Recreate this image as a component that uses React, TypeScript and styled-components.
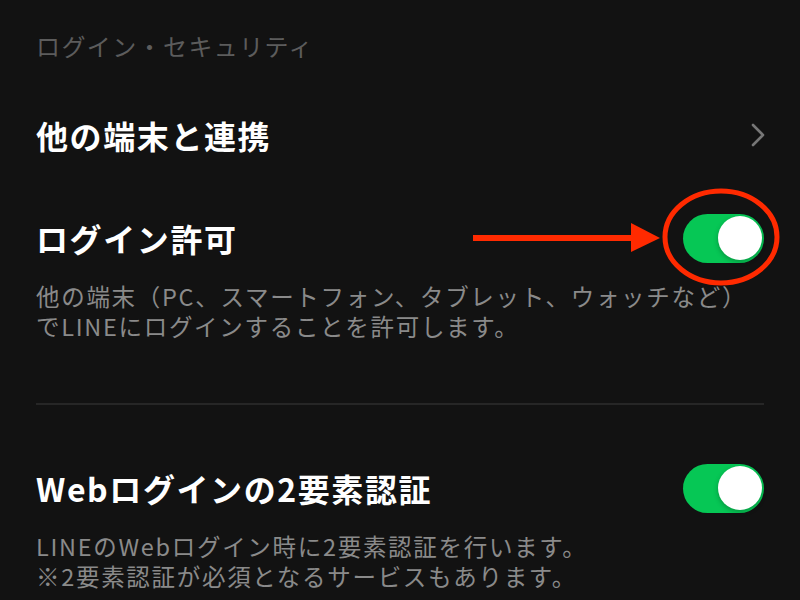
import React from "react";
import styled, { createGlobalStyle } from "styled-components";

const GlobalStyle = createGlobalStyle`
  html, body {
    margin: 0;
    padding: 0;
    background: #121212;
  }
  body {
    font-family: "Noto Sans CJK JP", "Noto Sans", sans-serif;
    -webkit-font-smoothing: antialiased;
  }
`;

const Page = styled.div`
  width: 800px;
  height: 600px;
  overflow: hidden;
  background: #121212;
  padding: 0 36px;
  box-sizing: border-box;
  display: flex;
  flex-direction: column;
`;

const SectionHeader = styled.div`
  margin-top: 31px;
  font-size: 24px;
  line-height: 30px;
  color: #5c5c5c;
  letter-spacing: 1.4px;
`;

const Row = styled.div<{ $top: number }>`
  position: relative;
  margin-top: ${(p) => p.$top}px;
  height: 60px;
  display: flex;
  align-items: center;
  justify-content: space-between;
`;

const Title = styled.div`
  font-size: 32px;
  font-weight: 700;
  color: #ffffff;
  letter-spacing: 1.6px;
  line-height: 60px;
`;

const Description = styled.div`
  margin-top: 13px;
  display: flex;
  flex-direction: column;
`;

const DescLine = styled.div`
  font-size: 23.5px;
  line-height: 30px;
  height: 30px;
  color: #8a8a8a;
  white-space: nowrap;
  letter-spacing: 1.7px;
`;

const Divider = styled.div`
  margin-top: 62px;
  height: 2px;
  background: #262626;
`;

const Track = styled.div<{ $on: boolean }>`
  width: 81px;
  height: 49px;
  border-radius: 25px;
  background: ${(p) => (p.$on ? "#06c755" : "#3a3a3c")};
  position: relative;
  flex-shrink: 0;
`;

const Knob = styled.div<{ $on: boolean }>`
  position: absolute;
  top: 2.5px;
  ${(p) => (p.$on ? "right: 2.5px;" : "left: 2.5px;")}
  width: 44px;
  height: 44px;
  border-radius: 50%;
  background: #ffffff;
  box-shadow: 0 2px 5px rgba(0, 0, 0, 0.25);
`;

const Chevron = styled.svg`
  width: 14px;
  height: 24px;
  margin-right: -1px;
`;

const Annotation = styled.svg`
  position: absolute;
  left: 436px;
  top: -20px;
  width: 310px;
  height: 100px;
  overflow: visible;
  pointer-events: none;
`;

const Toggle = ({ on }: { on: boolean }) => (
  <Track $on={on}>
    <Knob $on={on} />
  </Track>
);

export default function App() {
  return (
    <>
      <GlobalStyle />
      <Page>
        <SectionHeader>ログイン・セキュリティ</SectionHeader>
        <Row $top={44}>
          <Title>他の端末と連携</Title>
          <Chevron viewBox="0 0 14 24">
            <polyline
              points="2,2 12,12 2,22"
              fill="none"
              stroke="#767676"
              strokeWidth="2.6"
              strokeLinecap="round"
              strokeLinejoin="round"
            />
          </Chevron>
        </Row>
        <Row $top={43}>
          <Title>ログイン許可</Title>
          <Toggle on />
          <Annotation viewBox="436 -20 310 100">
            <line x1="437" y1="30" x2="600" y2="30" stroke="#ff2a00" strokeWidth="6" />
            <polygon points="595,15 624,30 595,44" fill="#ff2a00" />
            <ellipse cx="685" cy="29" rx="56" ry="46" fill="none" stroke="#ff2a00" strokeWidth="5" />
          </Annotation>
        </Row>
        <Description>
          <DescLine>他の端末（PC、スマートフォン、タブレット、ウォッチなど）</DescLine>
          <DescLine>でLINEにログインすることを許可します。</DescLine>
        </Description>
        <Divider />
        <Row $top={53}>
          <Title>Webログインの2要素認証</Title>
          <Toggle on />
        </Row>
        <Description>
          <DescLine>LINEのWebログイン時に2要素認証を行います。</DescLine>
          <DescLine>※2要素認証が必須となるサービスもあります。</DescLine>
        </Description>
      </Page>
    </>
  );
}
